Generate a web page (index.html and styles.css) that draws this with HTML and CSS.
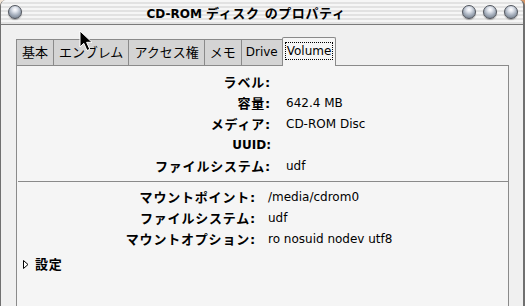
FILE: index.html
```html
<!DOCTYPE html>
<html lang="ja">
<head>
	<meta charset="UTF-8">
	<title>CD-ROM ディスク のプロパティ</title>
	<link rel="stylesheet" href="styles.css">
</head>
<body>
	<div class="window">
		<!-- タイトルバー -->
		<div class="titlebar">
			<span class="btn"></span>
			<span class="title">CD-ROM <span class="ja">ディスク のプロパティ</span></span>
			<span class="btns">
				<span class="btn"></span>
				<span class="btn"></span>
				<span class="btn"></span>
			</span>
		</div>
		<div class="body">
			<ul class="tabs">
				<li>基本</li>
				<li>エンブレム</li>
				<li>アクセス権</li>
				<li>メモ</li>
				<li class="latin">Drive</li>
				<li class="latin current"><span class="focus">Volume</span></li>
			</ul>
			<div class="panel">
				<div class="info first">
					<span class="label">ラベル:</span><span></span>
					<span class="label">容量:</span><span>642.4 MB</span>
					<span class="label">メディア:</span><span>CD-ROM Disc</span>
					<span class="label latin">UUID:</span><span></span>
					<span class="label">ファイルシステム:</span><span>udf</span>
				</div>
				<div class="sep"></div>
				<div class="info second">
					<span class="label">マウントポイント:</span><span>/media/cdrom0</span>
					<span class="label">ファイルシステム:</span><span>udf</span>
					<span class="label">マウントオプション:</span><span>ro nosuid nodev utf8</span>
				</div>
				<div class="expander">
					<svg width="6" height="9" viewBox="0 0 6 9"><path d="M0.5 0.5 L5 4.5 L0.5 8.5 Z" fill="#fff" stroke="#000" stroke-width="1"/></svg>
					<span>設定</span>
				</div>
			</div>
		</div>
		<!-- マウスカーソル -->
		<svg class="cursor" width="15" height="22" viewBox="0 0 15 22">
			<path d="M1 1 L1 17 L4.8 13.3 L8 20.5 L10.8 19.3 L7.6 12.3 L13 12.3 Z" fill="#000" stroke="#fff" stroke-width="1"/>
		</svg>
	</div>
</body>
</html>
```
FILE: styles.css
```css
*{padding:0;margin:0;box-sizing:border-box;}
ul,li{list-style:none;}
body{background:linear-gradient(90deg,#f3e6d8,#e8b88c 40%,#f0d0b0 70%,#d89868);font-family:"DejaVu Sans","Noto Sans CJK JP",sans-serif;font-size:12px;color:#000;}
.window{width:525px;height:306px;background:#f0f0f0;border-left:1px solid #707070;border-right:2px solid #707070;border-radius:6px 6px 0 0;overflow:hidden;position:relative;}
/* タイトルバー */
.titlebar{height:25px;border-bottom:1px solid #7a7a7a;display:flex;align-items:center;padding:0 5px 0 7px;background:repeating-linear-gradient(180deg,#f6f6f6 0,#f6f6f6 2px,#e2e2e2 2px,#e2e2e2 4px);}
.title{flex:1;text-align:center;font-weight:bold;font-size:12px;padding-left:8px;}
.title .ja{font-size:13px;letter-spacing:.6px;}
.btns{display:flex;gap:7px;}
.btn{width:14px;height:14px;border-radius:50%;border:1px solid #50545c;background:radial-gradient(circle at 50% 30%,#ffffff 0,#e2e6ee 22%,#9ca6b4 60%,#6c7480 100%);box-shadow:0 1px 1px rgba(0,0,0,.3);}
/* タブ */
.body{padding:12px 15px 0 15px;}
.tabs{display:flex;align-items:flex-end;height:28px;}
.tabs li{height:26px;line-height:25px;padding:0 5px;font-size:13px;background:#d4d4d4;border:1px solid #8a8a8a;border-bottom:none;margin-right:-1px;}
.tabs li.latin{font-size:12px;padding:0 4px;}
.tabs li.current{height:29px;background:#f5f5f5;border-radius:2px 2px 0 0;padding:0 2px;margin-bottom:-1px;line-height:26px;}
.focus{border:1px dotted #000;padding:1px 1px;}
.panel{height:260px;background:#f5f5f5;border:1px solid #8a8a8a;width:493px;padding-top:6px;}
/* 情報テーブル */
.info{display:grid;line-height:21px;}
.info .label{font-weight:bold;text-align:right;font-size:13px;letter-spacing:.8px;}
.info .label.latin{font-size:12px;letter-spacing:0;}
.first{grid-template-columns:254px auto;column-gap:15px;}
.second{grid-template-columns:239px auto;column-gap:12px;margin-top:5px;}
.sep{height:1px;background:#8a8a8a;margin:4px 0 0 1px;}
.expander{display:flex;align-items:center;gap:6px;padding-left:6px;margin-top:4px;line-height:21px;font-weight:bold;font-size:13px;letter-spacing:.8px;}
.cursor{position:absolute;left:78px;top:30px;}
```
